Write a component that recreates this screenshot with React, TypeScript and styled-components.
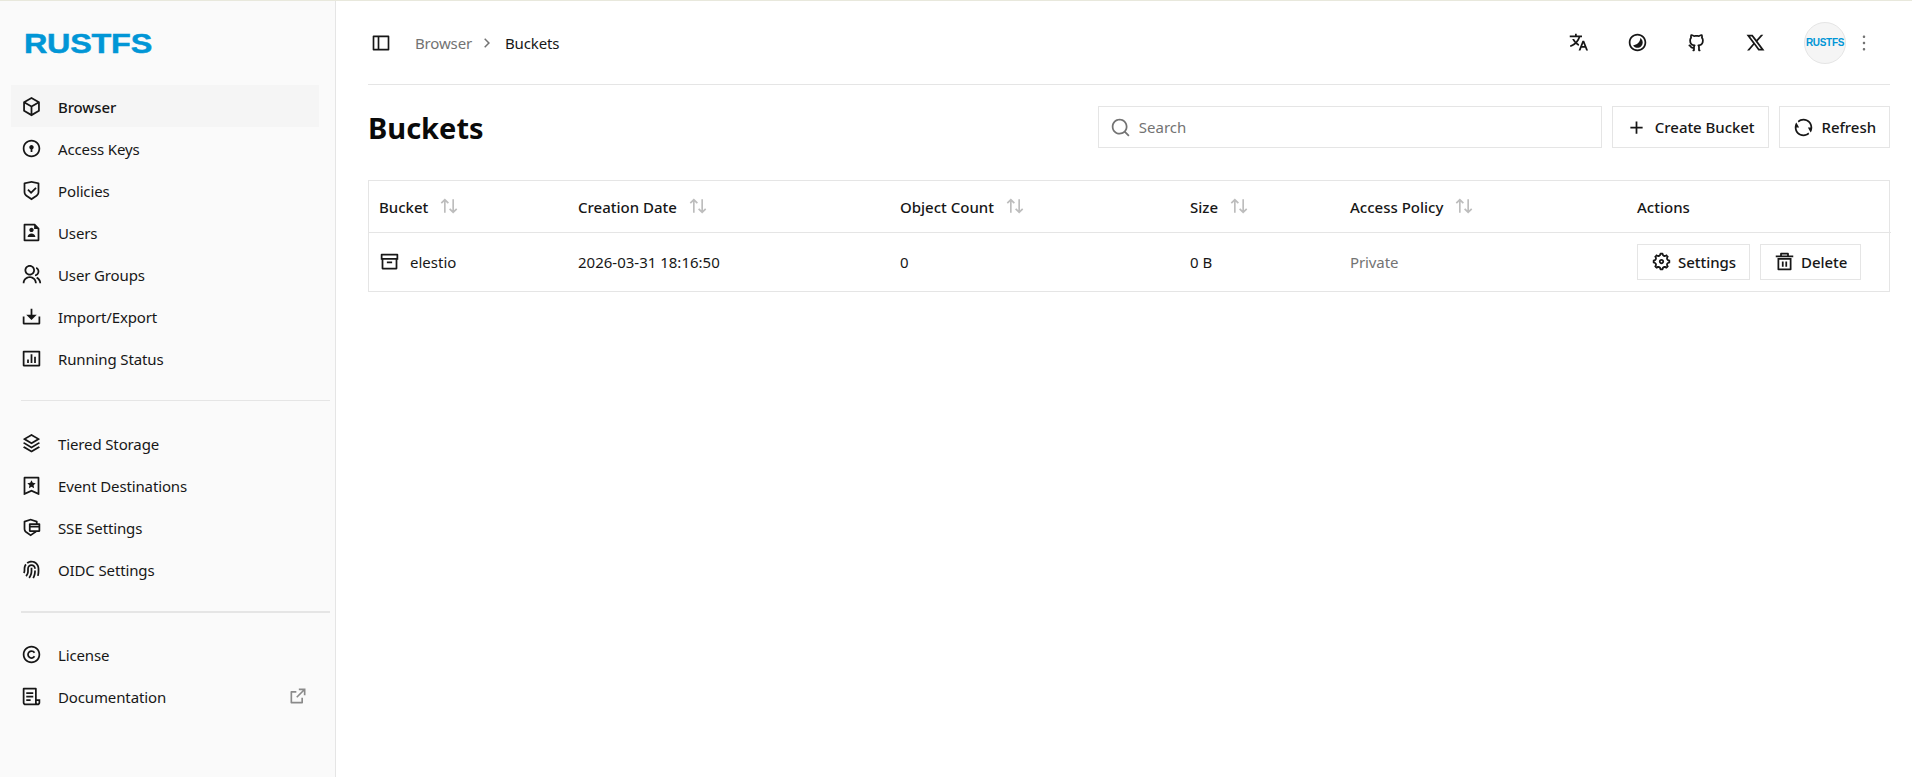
import React from 'react'
import styled, { createGlobalStyle } from 'styled-components'
import {
  RiAddLine,
  RiArchiveLine,
  RiArrowRightSLine,
  RiArrowUpDownLine,
  RiBarChartBoxLine,
  RiBookmark3Line,
  RiBox3Line,
  RiContrast2Line,
  RiCopyrightLine,
  RiDeleteBin5Line,
  RiDoorLockLine,
  RiDownload2Line,
  RiExternalLinkLine,
  RiFileList3Line,
  RiFileUserLine,
  RiFingerprintLine,
  RiGithubLine,
  RiGroupLine,
  RiMore2Line,
  RiRefreshLine,
  RiSearchLine,
  RiSecurePaymentLine,
  RiSettings5Line,
  RiShieldCheckLine,
  RiSideBarLine,
  RiStackLine,
  RiTranslate2,
  RiTwitterXLine,
} from 'react-icons/ri'

const GlobalStyle = createGlobalStyle`
  html, body { margin: 0; padding: 0; height: 100%; background: #fff; }
  body { font-family: "Noto Sans", "Open Sans", sans-serif; font-size: 15px; color: #0a0a0a; }
  #root { height: 100%; }
  * { box-sizing: border-box; }
`

const Shell = styled.div`
  display: flex;
  height: 777px;
  border-top: 1px solid #e8e8dc;
  overflow: hidden;
`

const Sidebar = styled.aside`
  width: 336px;
  flex: none;
  background: #fafafa;
  border-right: 1px solid #e5e5e5;
  padding: 0 5px 0 11px;
`

const LogoRow = styled.div`
  height: 84px;
  padding-left: 14px;
  padding-top: 2px;
  display: flex;
  align-items: center;
`

const Logo = styled.span<{ $small?: boolean }>`
  font-family: "Liberation Sans", sans-serif;
  font-weight: 700;
  color: #0196d6;
  display: inline-block;
  font-size: ${(p) => (p.$small ? '10px' : '28px')};
  letter-spacing: ${(p) => (p.$small ? '-0.3px' : '-0.2px')};
  margin-left: ${(p) => (p.$small ? '0' : '-1px')};
  transform: scaleX(${(p) => (p.$small ? 1 : 1.155)});
  transform-origin: ${(p) => (p.$small ? 'center' : 'left center')};
  -webkit-text-stroke: ${(p) => (p.$small ? '0' : '0.5px #0196d6')};
`

const NavList = styled.nav`
  display: flex;
  flex-direction: column;
  padding-right: 11px;
`

const NavItem = styled.a<{ $active?: boolean }>`
  height: 42px;
  display: flex;
  align-items: center;
  gap: 16px;
  padding: 2px 11px 0 10px;
  background: ${(p) => (p.$active ? '#f5f5f5' : 'transparent')};
  font-weight: ${(p) => (p.$active ? 500 : 400)};
  letter-spacing: -0.13px;
  color: #171717;
  svg { width: 21px; height: 21px; flex: none; color: #171717; margin-top: -2px; }
`

const ExternalIcon = styled.span`
  margin-left: auto;
  display: flex;
  svg { width: 20px; height: 20px; color: #8a8a8a; }
`

const Divider = styled.hr<{ $thick?: boolean }>`
  margin: 21px 0 ${(p) => (p.$thick ? 20 : 21)}px 10px;
  border: none;
  height: ${(p) => (p.$thick ? 2 : 1)}px;
  background: #e5e5e5;
`

const Main = styled.main`
  flex: 1;
  min-width: 0;
  padding: 0 22px 0 32px;
`

const TopBar = styled.header`
  height: 84px;
  display: flex;
  align-items: center;
  border-bottom: 1px solid #e5e5e5;
`

const SideToggle = styled.span`
  display: flex;
  margin-left: 3px;
  margin-right: 24px;
  svg { width: 20px; height: 20px; color: #171717; }
`

const Crumbs = styled.div`
  display: flex;
  align-items: center;
  gap: 6px;
  color: #171717;
  letter-spacing: -0.15px;
  svg { width: 18px; height: 18px; color: #737373; margin-right: 3px; }
`

const CrumbLink = styled.span`
  color: #737373;
`

const TopIcons = styled.div`
  margin-left: auto;
  display: flex;
  align-items: center;
  gap: 38px;
  svg { width: 21px; height: 21px; color: #171717; }
`

const Profile = styled.div`
  display: flex;
  align-items: center;
  gap: 8px;
  margin-right: 16px;
  svg { width: 20px; height: 20px; color: #737373; }
`

const Avatar = styled.div`
  width: 42px;
  height: 42px;
  border-radius: 50%;
  background: #f5f5f5;
  border: 1px solid #e5e5e5;
  display: flex;
  align-items: center;
  justify-content: center;
  overflow: hidden;
`

const TitleRow = styled.div`
  height: 95px;
  padding-top: 21px;
  display: flex;
  align-items: flex-start;
  gap: 10px;
`

const Title = styled.h1`
  margin: 2px auto 0 0;
  font-size: 29px;
  line-height: 40px;
  font-weight: 700;
  color: #0a0a0a;
`

const SearchBox = styled.label`
  width: 504px;
  height: 42px;
  border: 1px solid #e5e5e5;
  display: flex;
  align-items: center;
  gap: 6px;
  padding: 0 11px;
  color: #737373;
  svg { width: 21px; height: 21px; flex: none; }
`

const SearchInput = styled.input`
  border: none;
  outline: none;
  flex: 1;
  font: inherit;
  padding-top: 1px;
  color: #171717;
  background: transparent;
  &::placeholder { color: #737373; }
`

const Button = styled.button<{ $compact?: boolean }>`
  height: ${(p) => (p.$compact ? 36 : 42)}px;
  padding: 0 13px;
  border: 1px solid #e5e5e5;
  background: #fff;
  display: inline-flex;
  align-items: center;
  gap: ${(p) => (p.$compact ? 6 : 8)}px;
  font: inherit;
  font-weight: 500;
  letter-spacing: -0.05px;
  color: #171717;
  svg { width: 21px; height: 21px; flex: none; }
`

const TableWrap = styled.div`
  border: 1px solid #e5e5e5;
`

const Table = styled.table`
  width: 100%;
  border-collapse: collapse;
  table-layout: fixed;
`

const HeadCell = styled.th<{ $width: number }>`
  width: ${(p) => p.$width}px;
  height: 51px;
  padding: 2px 10px 0;
  text-align: left;
  font-weight: 500;
  color: #171717;
  border-bottom: 1px solid #e5e5e5;
`

const HeadInner = styled.span`
  display: flex;
  align-items: center;
  gap: 11px;
  svg { width: 20px; height: 20px; color: #bdbdbd; margin-top: -2px; }
`

const Cell = styled.td<{ $muted?: boolean }>`
  height: 59px;
  padding: 0 10px;
  letter-spacing: ${(p) => (p.$muted ? '-0.1px' : '0')};
  color: ${(p) => (p.$muted ? '#737373' : '#171717')};
`

const BucketName = styled.span`
  display: flex;
  align-items: center;
  gap: 10px;
  svg { width: 21px; height: 21px; }
`

const Actions = styled.div`
  display: flex;
  gap: 10px;
`

const mainNav = [
  { label: 'Browser', icon: <RiBox3Line />, active: true },
  { label: 'Access Keys', icon: <RiDoorLockLine /> },
  { label: 'Policies', icon: <RiShieldCheckLine /> },
  { label: 'Users', icon: <RiFileUserLine /> },
  { label: 'User Groups', icon: <RiGroupLine /> },
  { label: 'Import/Export', icon: <RiDownload2Line /> },
  { label: 'Running Status', icon: <RiBarChartBoxLine /> },
]

const configNav = [
  { label: 'Tiered Storage', icon: <RiStackLine /> },
  { label: 'Event Destinations', icon: <RiBookmark3Line /> },
  { label: 'SSE Settings', icon: <RiSecurePaymentLine /> },
  { label: 'OIDC Settings', icon: <RiFingerprintLine /> },
]

const columns = [
  { label: 'Bucket', width: 199, sort: true },
  { label: 'Creation Date', width: 322, sort: true },
  { label: 'Object Count', width: 290, sort: true },
  { label: 'Size', width: 160, sort: true },
  { label: 'Access Policy', width: 287, sort: true },
  { label: 'Actions', width: 264, sort: false },
]

export default function App() {
  return (
    <Shell>
      <GlobalStyle />
      <Sidebar>
        <LogoRow>
          <Logo>RUSTFS</Logo>
        </LogoRow>
        <NavList>
          {mainNav.map((item) => (
            <NavItem key={item.label} $active={item.active}>
              {item.icon}
              {item.label}
            </NavItem>
          ))}
        </NavList>
        <Divider />
        <NavList>
          {configNav.map((item) => (
            <NavItem key={item.label}>
              {item.icon}
              {item.label}
            </NavItem>
          ))}
        </NavList>
        <Divider $thick />
        <NavList>
          <NavItem>
            <RiCopyrightLine />
            License
          </NavItem>
          <NavItem>
            <RiFileList3Line />
            Documentation
            <ExternalIcon>
              <RiExternalLinkLine />
            </ExternalIcon>
          </NavItem>
        </NavList>
      </Sidebar>
      <Main>
        <TopBar>
          <SideToggle>
            <RiSideBarLine />
          </SideToggle>
          <Crumbs>
            <CrumbLink>Browser</CrumbLink>
            <RiArrowRightSLine />
            <span>Buckets</span>
          </Crumbs>
          <TopIcons>
            <RiTranslate2 />
            <RiContrast2Line />
            <RiGithubLine />
            <RiTwitterXLine />
            <Profile>
              <Avatar>
                <Logo $small>RUSTFS</Logo>
              </Avatar>
              <RiMore2Line />
            </Profile>
          </TopIcons>
        </TopBar>
        <TitleRow>
          <Title>Buckets</Title>
          <SearchBox>
            <RiSearchLine />
            <SearchInput placeholder="Search" />
          </SearchBox>
          <Button>
            <RiAddLine />
            Create Bucket
          </Button>
          <Button>
            <RiRefreshLine />
            Refresh
          </Button>
        </TitleRow>
        <TableWrap>
          <Table>
            <thead>
              <tr>
                {columns.map((col) => (
                  <HeadCell key={col.label} $width={col.width}>
                    <HeadInner>
                      {col.label}
                      {col.sort && <RiArrowUpDownLine />}
                    </HeadInner>
                  </HeadCell>
                ))}
              </tr>
            </thead>
            <tbody>
              <tr>
                <Cell>
                  <BucketName>
                    <RiArchiveLine />
                    elestio
                  </BucketName>
                </Cell>
                <Cell>2026-03-31 18:16:50</Cell>
                <Cell>0</Cell>
                <Cell>0 B</Cell>
                <Cell $muted>Private</Cell>
                <Cell>
                  <Actions>
                    <Button $compact>
                      <RiSettings5Line />
                      Settings
                    </Button>
                    <Button $compact>
                      <RiDeleteBin5Line />
                      Delete
                    </Button>
                  </Actions>
                </Cell>
              </tr>
            </tbody>
          </Table>
        </TableWrap>
      </Main>
    </Shell>
  )
}
